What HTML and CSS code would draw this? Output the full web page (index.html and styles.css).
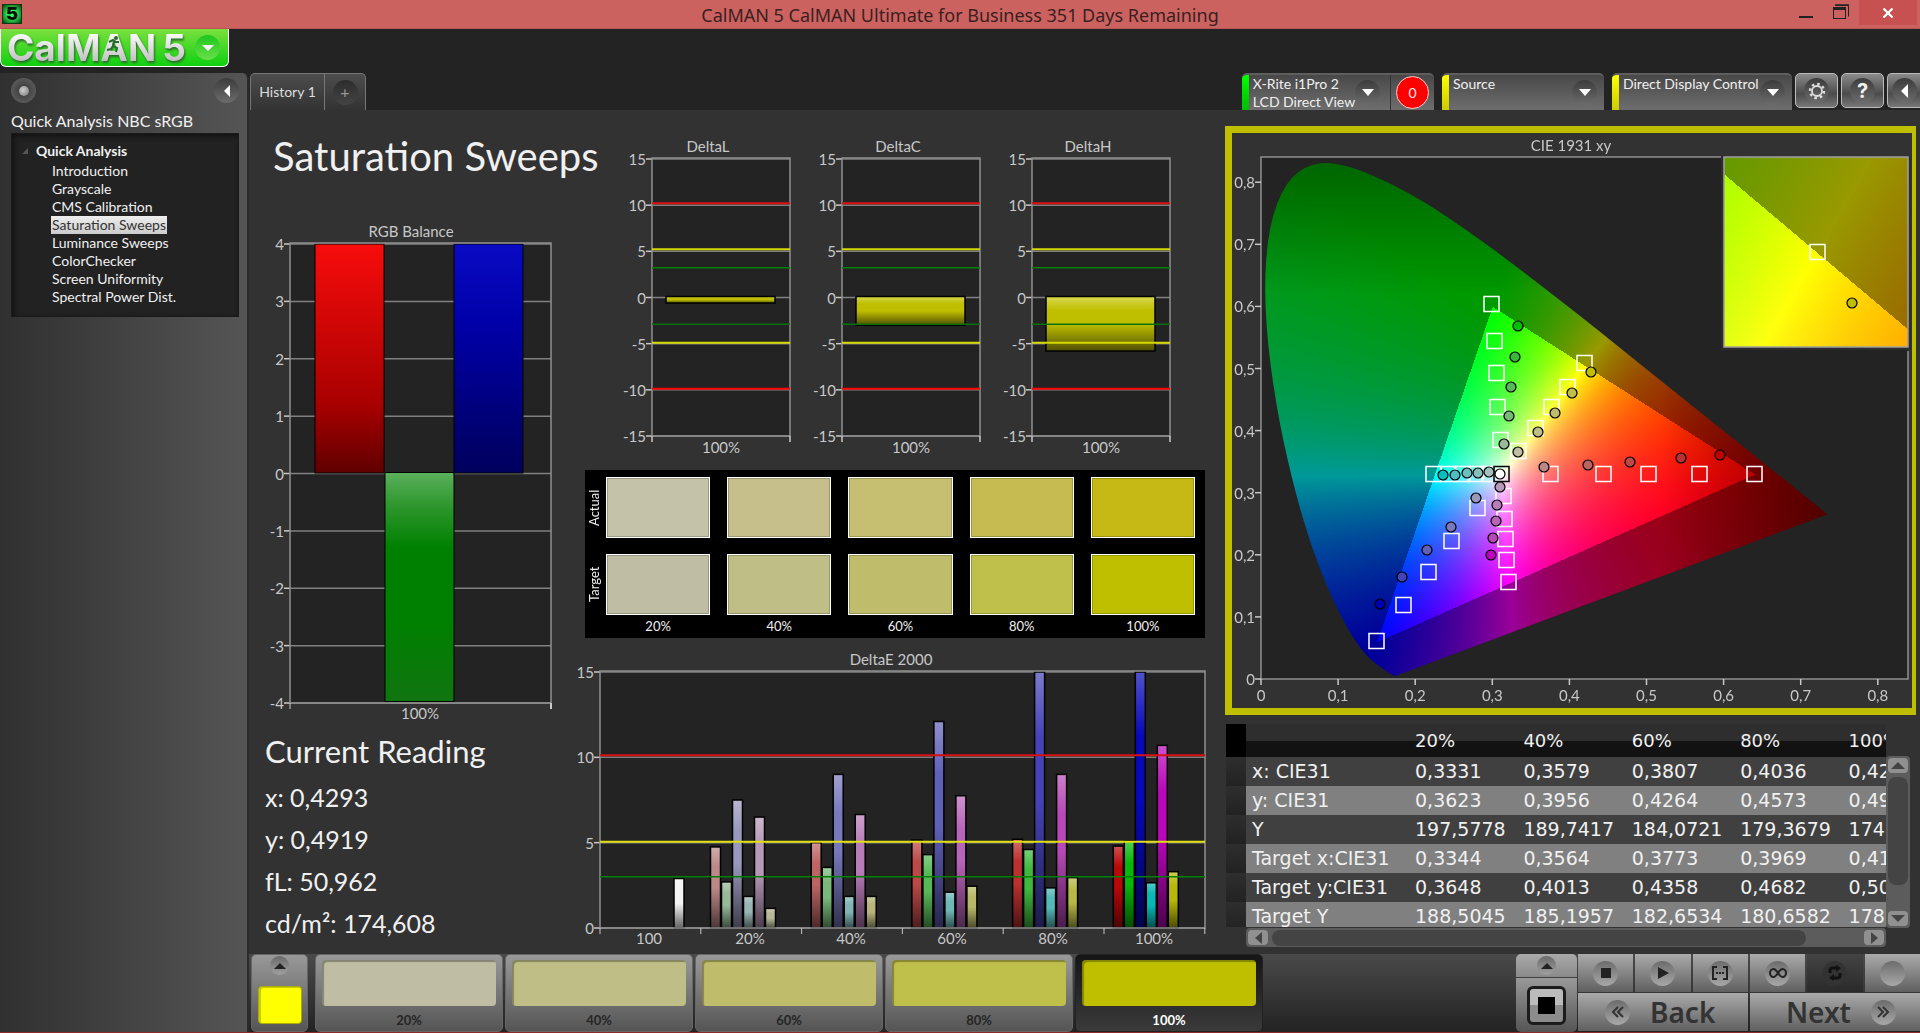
FILE: index.html
```html
<!DOCTYPE html>
<html lang="en">
<head>
<meta charset="utf-8">
<title>CalMAN 5</title>
<link rel="stylesheet" href="styles.css">
</head>
<body>
<header class="titlebar">
  <span class="app-icon">5</span>
  <span class="window-title">CalMAN 5 CalMAN Ultimate for Business 351 Days Remaining</span>
  <div class="window-buttons">
    <button class="win-btn" aria-label="Minimize"><svg width="14" height="20"><path d="M0 16h14v2H0z" fill="#222"/></svg></button>
    <button class="win-btn" aria-label="Restore"><svg width="16" height="20" fill="none" stroke="#222"><path d="M3 5.5h12.500v11" stroke-width="1"/><path d="M2 5h14" stroke-width="1.500"/><rect x=".5" y="8.500" width="12" height="10"/><path d="M0 8.500h13" stroke-width="3"/></svg></button>
    <button class="win-btn close" aria-label="Close"><svg width="12" height="10"><path d="M1.500 .5l9 9M10.500 .5l-9 9" stroke="#fff" stroke-width="2.200"/></svg></button>
  </div>
</header>

<div class="brand-bar">
  <button class="brand" aria-label="CalMAN 5 menu">
    <span class="brand-name">CalMAN<span class="brand-num">5</span></span>
    <svg class="runner" width="16" height="18" viewBox="0 0 16 18"><circle cx="10" cy="3" r="2" fill="#2a6a2a"/><path d="M3 7l4-2 3 2 3 0M8 6L7 11l4 2-1 4M7 11l-2 3-4 1" fill="none" stroke="#2a6a2a" stroke-width="2"/></svg>
    <span class="round brand-arrow"><svg width="12" height="6"><path d="M0 0h12L6 6z" fill="#fff"/></svg></span>
  </button>
</div>

<div class="workspace">
  <aside class="sidebar">
    <div class="side-tools">
      <button class="round knob" aria-label="Options"><span class="ball"></span></button>
      <button class="round" aria-label="Collapse"><svg width="6" height="12"><path d="M6 0v12L0 6z" fill="#fff"/></svg></button>
    </div>
    <h2 class="side-title">Quick Analysis NBC sRGB</h2>
    <nav class="tree">
      <div class="tree-root"><svg width="6" height="6"><path d="M6 0v6H0z" fill="#555"/></svg>Quick Analysis</div>
      <ul>
        <li><a href="#">Introduction</a></li>
        <li><a href="#">Grayscale</a></li>
        <li><a href="#">CMS Calibration</a></li>
        <li><a href="#" class="current">Saturation Sweeps</a></li>
        <li><a href="#">Luminance Sweeps</a></li>
        <li><a href="#">ColorChecker</a></li>
        <li><a href="#">Screen Uniformity</a></li>
        <li><a href="#">Spectral Power Dist.</a></li>
      </ul>
    </nav>
  </aside>

  <div class="content">
    <div class="topbar">
      <div class="tabs">
        <button class="tab">History 1</button>
        <button class="tab add" aria-label="Add tab"><span class="round plus">+</span></button>
      </div>
      <div class="devices">
        <div class="device meter">
          <span class="stripe green"></span>
          <span class="device-text">X-Rite i1Pro 2<br>LCD Direct View</span>
          <button class="round" aria-label="Meter menu"><svg width="12" height="7"><path d="M0 0h12L6 7z" fill="#fff"/></svg></button>
          <span class="count"><span class="count-dot">0</span></span>
        </div>
        <div class="device source">
          <span class="stripe yellow"></span>
          <span class="device-text">Source</span>
          <button class="round" aria-label="Source menu"><svg width="12" height="7"><path d="M0 0h12L6 7z" fill="#fff"/></svg></button>
        </div>
        <div class="device display">
          <span class="stripe yellow"></span>
          <span class="device-text">Direct Display Control</span>
          <button class="round" aria-label="Display menu"><svg width="12" height="7"><path d="M0 0h12L6 7z" fill="#fff"/></svg></button>
        </div>
        <button class="square-btn" aria-label="Settings"><span class="round"><svg width="18" height="18" viewBox="-9 -9 18 18" fill="none" stroke="#ddd"><circle r="5" stroke-width="1.800"/><circle r="7" stroke-width="2.500" stroke-dasharray="2.500 3"/></svg></span></button>
        <button class="square-btn" aria-label="Help"><span class="round help">?</span></button>
        <button class="square-btn cut" aria-label="Collapse panel"><span class="round"><svg width="7" height="14"><path d="M7 0v14L0 7z" fill="#fff"/></svg></span></button>
      </div>
    </div>

    <main class="board">
      <section class="col-left">
        <h1>Saturation Sweeps</h1>
        <svg id="rgb" class="chart" viewBox="0 0 300 505"></svg>
        <div class="reading">
          <h2>Current Reading</h2>
          <p>x: 0,4293</p>
          <p>y: 0,4919</p>
          <p>fL: 50,962</p>
          <p>cd/m²: 174,608</p>
        </div>
      </section>

      <section class="col-mid">
        <div class="deltas">
          <svg id="deltaL" class="chart" viewBox="0 0 190 320"></svg>
          <svg id="deltaC" class="chart" viewBox="0 0 190 320"></svg>
          <svg id="deltaH" class="chart" viewBox="0 0 190 320"></svg>
        </div>
        <div class="swatches">
          <span class="row-name">Actual</span>
          <i class="sw a20"></i><i class="sw a40"></i><i class="sw a60"></i><i class="sw a80"></i><i class="sw a100"></i>
          <span class="row-name">Target</span>
          <i class="sw t20"></i><i class="sw t40"></i><i class="sw t60"></i><i class="sw t80"></i><i class="sw t100"></i>
          <span></span>
          <span class="sw-label">20%</span><span class="sw-label">40%</span><span class="sw-label">60%</span><span class="sw-label">80%</span><span class="sw-label">100%</span>
        </div>
        <svg id="deltaE" class="chart" viewBox="0 0 632 300"></svg>
      </section>

      <section class="col-right">
        <div class="cie">
          <canvas id="gamut" width="680" height="575"></canvas>
          <svg id="ciePlot" class="chart" viewBox="0 0 680 575"></svg>
        </div>
        <div class="grid-wrap">
          <div class="grid-clip">
            <table>
              <colgroup><col class="c-head"><col class="c-name"><col><col><col><col><col></colgroup>
              <thead><tr><td></td><th></th><th>20%</th><th>40%</th><th>60%</th><th>80%</th><th>100%</th></tr></thead>
              <tbody>
                <tr><td></td><th>x: CIE31</th><td>0,3331</td><td>0,3579</td><td>0,3807</td><td>0,4036</td><td>0,4293</td></tr>
                <tr><td></td><th>y: CIE31</th><td>0,3623</td><td>0,3956</td><td>0,4264</td><td>0,4573</td><td>0,4919</td></tr>
                <tr><td></td><th>Y</th><td>197,5778</td><td>189,7417</td><td>184,0721</td><td>179,3679</td><td>174,6080</td></tr>
                <tr><td></td><th>Target x:CIE31</th><td>0,3344</td><td>0,3564</td><td>0,3773</td><td>0,3969</td><td>0,4193</td></tr>
                <tr><td></td><th>Target y:CIE31</th><td>0,3648</td><td>0,4013</td><td>0,4358</td><td>0,4682</td><td>0,5053</td></tr>
                <tr><td></td><th>Target Y</th><td>188,5045</td><td>185,1957</td><td>182,6534</td><td>180,6582</td><td>178,6582</td></tr>
              </tbody>
            </table>
          </div>
          <div class="vbar">
            <button aria-label="Scroll up"><svg width="14" height="7"><path d="M0 7h14L7 0z" fill="#444"/></svg></button>
            <span class="thumb"></span>
            <button aria-label="Scroll down"><svg width="14" height="7"><path d="M0 0h14L7 7z" fill="#444"/></svg></button>
          </div>
          <div class="hbar">
            <button aria-label="Scroll left"><svg width="7" height="12"><path d="M7 0v12L0 6z" fill="#444"/></svg></button>
            <span class="thumb"></span>
            <button aria-label="Scroll right"><svg width="7" height="12"><path d="M0 0v12L7 6z" fill="#444"/></svg></button>
          </div>
        </div>
      </section>
    </main>

    <footer class="footer">
      <button class="picker" aria-label="Colour">
        <span class="round small"><svg width="12" height="6"><path d="M0 6h12L6 0z" fill="#222"/></svg></span>
        <i class="picker-color"></i>
      </button>
      <div class="tiles">
        <button class="tile"><i class="t20"></i>20%</button>
        <button class="tile"><i class="t40"></i>40%</button>
        <button class="tile"><i class="t60"></i>60%</button>
        <button class="tile"><i class="t80"></i>80%</button>
        <button class="tile active"><i class="t100"></i>100%</button>
      </div>
      <div class="pattern">
        <button class="pattern-up" aria-label="Pattern menu"><span class="round small"><svg width="12" height="6"><path d="M0 6h12L6 0z" fill="#222"/></svg></span></button>
        <button class="pattern-pick" aria-label="Pattern window"><span class="frame"><i></i></span></button>
      </div>
      <div class="controls">
        <button aria-label="Stop"><span class="round"><svg width="12" height="12"><path d="M1 1h10v10H1z" fill="#222"/></svg></span></button>
        <button aria-label="Play"><span class="round"><svg width="12" height="14"><path d="M1 1v12l11-6z" fill="#222"/></svg></span></button>
        <button aria-label="Read series"><span class="round"><svg width="16" height="14" fill="none" stroke="#222" stroke-width="2"><path d="M5 1H1v12h4M11 1h4v12h-4"/><path d="M4 7h8" stroke-dasharray="2 1"/></svg></span></button>
        <button aria-label="Continuous"><span class="round"><svg width="18" height="10" fill="none" stroke="#222" stroke-width="2"><path d="M9 5C7 2 6 1 4.500 1a3.500 4 0 0 0 0 8C6 9 7 8 9 5s3-4 4.500-4a3.500 4 0 0 1 0 8C12 9 11 8 9 5z"/></svg></span></button>
        <button class="dark" aria-label="Refresh"><span class="round"><svg width="16" height="16" fill="none" stroke="#111" stroke-width="3"><path d="M3 8V5q0-2 3-2h4M13 8v3q0 2-3 2H6"/><path d="M9 0l5 3-5 4zM7 9l-5 4 5 3z" fill="#111" stroke="none"/></svg></span></button>
        <button aria-label="Status"><span class="round"></span></button>
        <button class="wide"><span class="round"><svg width="13" height="12" fill="none" stroke="#333" stroke-width="2"><path d="M7 1L2 6l5 5M12 1L7 6l5 5"/></svg></span>Back</button>
        <button class="wide next">Next<span class="round"><svg width="13" height="12" fill="none" stroke="#333" stroke-width="2"><path d="M1 1l5 5-5 5M6 1l5 5-5 5"/></svg></span></button>
      </div>
    </footer>
  </div>
</div>
<script src="charts.js"></script>
</body>
</html>
```
FILE: styles.css
```css
* { box-sizing: border-box; }
body {
  margin: 0;
  min-height: 100vh;
  display: flex;
  flex-direction: column;
  overflow-x: hidden;
  background: #232323;
  color: #f0f0f0;
  font: 14px/18px Lato, "Liberation Sans", sans-serif;
  border-bottom: 1px solid #8c2a2a;
}
button {
  border: 0;
  padding: 0;
  background: none;
  color: inherit;
  font: inherit;
}
h1, h2, p, ul { margin: 0; padding: 0; font-weight: 400; }
svg { display: block; flex: none; }
.chart { width: 100%; height: auto; overflow: visible; font-size: 15px; }

.round {
  display: flex;
  align-items: center;
  justify-content: center;
  flex: none;
  width: 25px;
  height: 25px;
  border-radius: 50%;
  background: linear-gradient(#3c3c3c, #6c6c6c);
}
.round.small {
  width: 19px;
  height: 19px;
  background: linear-gradient(#6a6a6a, #a0a0a0);
}

/* Title bar */
.titlebar {
  display: grid;
  grid-template-columns: 1fr auto 1fr;
  height: 29px;
  background: #cc625f;
  border-bottom: 1px solid #b85552;
}
.app-icon {
  width: 20px;
  height: 20px;
  margin: 4px 2px;
  background: radial-gradient(#3f6 30%, #0b3d0b);
  border: 1px solid #0c3a0c;
  color: #031003;
  font: 900 18px/18px Inter, sans-serif;
  text-align: center;
}
.window-title {
  color: #3a1f1f;
  font: 18px/30px "Noto Sans", sans-serif;
}
.window-buttons {
  display: flex;
  justify-content: flex-end;
  gap: 20px;
  padding-right: 3px;
}
.win-btn { height: 20px; }
.win-btn.close {
  display: flex;
  align-items: center;
  justify-content: center;
  width: 58px;
  height: 25px;
  margin-left: -10px;
  background: #c75050;
}

/* Logo */
.brand-bar { height: 44px; }
.brand {
  position: relative;
  display: flex;
  align-items: center;
  justify-content: space-between;
  width: 229px;
  height: 38px;
  padding: 0 8px 0 6px;
  border: 1px solid #fff;
  border-top: 0;
  border-radius: 0 0 6px 6px;
  background: linear-gradient(#7be03f, #0fd00f);
}
.brand-name {
  font: 700 37px/32px Inter, sans-serif;
  background: linear-gradient(#fff, #bbb);
  background-clip: text;
  -webkit-background-clip: text;
  color: transparent;
  filter: drop-shadow(1px 2px 1px #2a6a2a);
}
.brand-num { margin-left: 6px; }
.runner { position: absolute; left: 105px; top: 6px; }
.brand-arrow { background: linear-gradient(#1cc61c, #6be04a); }

/* Sidebar */
.workspace { display: flex; flex: 1; }
.sidebar {
  flex: none;
  width: 249px;
  padding: 5px 8px 0 11px;
  border-radius: 0 6px 0 0;
  border-right: 2px solid #2c2c2c;
  background: linear-gradient(90deg, #303030, #555);
}
.side-tools { display: flex; justify-content: space-between; }
.knob { background: radial-gradient(#333, #6a6a6a); }
.ball {
  width: 10px;
  height: 10px;
  border-radius: 50%;
  background: radial-gradient(circle at 40% 40%, #ccc, #777);
}
.side-title { margin: 8px 0 2px; font-size: 16px; line-height: 20px; white-space: nowrap; }
.tree {
  height: 184px;
  padding: 8px 0 0 10px;
  border: 1px solid #1a1a1a;
  background: #222;
  box-shadow: inset 2px 2px 5px #111;
}
.tree-root {
  display: flex;
  align-items: center;
  gap: 8px;
  margin-bottom: 2px;
  font-weight: 700;
}
.tree ul { padding-left: 29px; list-style: none; }
.tree a { display: inline-block; padding: 0 1px; color: inherit; text-decoration: none; }
.tree li { height: 18px; white-space: nowrap; }
.tree .current { background: linear-gradient(#eee, #ccc); color: #333; }

/* Tabs and devices */
.content { flex: 1; min-width: 0; display: flex; flex-direction: column; }
.topbar { display: flex; justify-content: space-between; height: 37px; }
.tabs {
  display: flex;
  margin-left: 1px;
  border: 1px solid #777;
  border-bottom: 0;
  border-radius: 5px 5px 0 0;
  background: linear-gradient(#4c4c4c, #333);
  color: #ddd;
}
.tab { width: 73px; }
.tab.add { display: flex; align-items: center; justify-content: center; width: 41px; border-left: 1px solid #777; }
.plus { background: linear-gradient(#2c2c2c, #444); color: #999; font-size: 16px; }
.devices { display: flex; gap: 3px; }
.device {
  display: flex;
  align-items: center;
  border-top: 2px solid #5e5e5e;
  border-radius: 5px 5px 0 0;
  background: linear-gradient(#484848, #6e6e6e);
  overflow: hidden;
}
.meter { width: 192px; margin-right: 5px; }
.source { width: 162px; margin-right: 5px; }
.display { width: 180px; }
.stripe { width: 7px; align-self: stretch; margin-right: 4px; }
.stripe.green { background: linear-gradient(#0f0, #0b0); }
.stripe.yellow { background: linear-gradient(#ff0, #cc0); }
.device-text { flex: 1; align-self: flex-start; line-height: 18px; white-space: nowrap; }
.source .round, .display .round { margin-right: 7px; }
.count {
  display: flex;
  align-items: center;
  justify-content: center;
  align-self: stretch;
  width: 45px;
  margin-left: 10px;
  border-left: 1px solid #333;
}
.count-dot {
  width: 33px;
  height: 33px;
  border: 1px solid #ffd0d0;
  border-radius: 50%;
  background: red;
  line-height: 31px;
  text-align: center;
}
.square-btn {
  display: flex;
  align-items: center;
  justify-content: center;
  width: 43px;
  height: 35px;
  border: 1px solid #bbb;
  border-radius: 5px;
  background: linear-gradient(#8a8a8a, #4c4c4c 60%, #777);
}
.square-btn.cut { width: 33px; border-right: 0; border-radius: 5px 0 0 5px; }
.help { font: 700 20px/24px Inter, sans-serif; }

/* Board */
.board {
  flex: 1;
  display: grid;
  grid-template-columns: minmax(0, 324fr) minmax(0, 652fr) minmax(0, 691fr);
  padding-right: 4px;
  background: #323232;
}
.col-left { padding: 14px 8px 0 16px; }
.col-left h1 { margin: 0 0 33px 8px; font-size: 40px; line-height: 64px; white-space: nowrap; }
.reading h2 { font-size: 31px; line-height: 50px; white-space: nowrap; }
.reading p { font-size: 25px; line-height: 42px; }
.col-mid { padding: 28px 20px 0 0; }
.deltas { display: grid; grid-template-columns: repeat(3, 1fr); margin: 0 23px 12px 39px; }
.swatches {
  display: grid;
  grid-template-columns: 4px repeat(5, 1fr);
  grid-template-rows: 61px 61px 20px;
  gap: 16px 17px;
  height: 168px;
  margin: 0 0 12px 12px;
  padding: 7px 10px 0 0;
  background: #000;
}
.row-name {
  justify-self: start;
  width: 18px;
  writing-mode: vertical-rl;
  transform: rotate(180deg);
  text-align: center;
  font-size: 13px;
  line-height: 18px;
}
.sw { border: 1px solid #fff; box-shadow: inset 0 0 0 1px rgba(0, 0, 0, .2); }
.sw-label { margin-top: -14px; text-align: center; font-size: 13px; line-height: 18px; }
.a20 { background: #c4c2a8; }
.a40 { background: #c6be8b; }
.a60 { background: #c6be70; }
.a80 { background: #c6bb50; }
.a100 { background: #c6b815; }
.t20 { background: #bfbea5; }
.t40 { background: #bfbe87; }
.t60 { background: #bfbd6b; }
.t80 { background: #bfbf4c; }
.t100 { background: #bfbf00; }

.col-right { padding-top: 16px; }
.cie {
  position: relative;
  border: 7px solid #bfbf00;
  border-right-width: 4px;
}
.cie canvas { position: absolute; inset: 0; width: 100%; height: 100%; }
.cie svg { position: relative; }

/* Readings grid */
.grid-wrap {
  display: grid;
  grid-template-columns: 1fr 24px;
  margin: 9px 6px 0 1px;
}
.grid-clip { height: 203px; overflow: hidden; }
table {
  width: 725px;
  table-layout: fixed;
  border-collapse: collapse;
  font: 19px/29px "DejaVu Sans", sans-serif;
}
.c-head { width: 20px; }
.c-name { width: 163px; }
th, td { height: 29px; padding: 0 0 0 6px; font-weight: 400; text-align: left; white-space: nowrap; }
thead th { height: 33px; font-size: 18px; background: linear-gradient(#2e2e2e 50%, #121212 50%); }
thead td:first-child { background: #000; }
tbody td:first-child { background: linear-gradient(#2e2e2e, #222); }
tbody tr { background: #404040; }
tbody tr:nth-child(even) { background: #808080; }
.vbar, .hbar { display: flex; align-items: center; justify-content: space-between; background: #5c5c5c; border-radius: 4px; }
.vbar { flex-direction: column; margin-top: 32px; padding: 2px 0; gap: 4px; }
.hbar { height: 19px; margin-left: 20px; padding: 0 2px; gap: 4px; }
.vbar button, .hbar button {
  display: flex;
  align-items: center;
  justify-content: center;
  width: 20px;
  height: 15px;
  border-radius: 4px;
  background: #909090;
}
.vbar .thumb { width: 20px; height: 108px; margin-bottom: 22px; border-radius: 8px; background: #444; }
.hbar .thumb { width: 84%; height: 16px; margin-right: auto; border-radius: 8px; background: #444; }

/* Footer */
.footer {
  display: flex;
  height: 78px;
  background: linear-gradient(#4a4a4a, #232323);
}
.picker, .tile {
  border: 1px solid #666;
  border-radius: 5px;
  background: linear-gradient(#999, #555);
}
.picker {
  display: flex;
  flex-direction: column;
  align-items: center;
  width: 57px;
  margin: 0 7px 0 2px;
  padding-top: 1px;
}
.picker-color {
  width: 44px;
  height: 38px;
  margin-top: 11px;
  border: 1px solid #aa0;
  border-radius: 4px;
  background: #ff0;
  box-shadow: inset 2px 1px 0 #cc0;
}
.tiles { display: flex; flex: 0 1 948px; gap: 2px; }
.tile { flex: 1; padding: 3px 6px 0; color: #262626; font-size: 13px; font-weight: 700; }
.tile i {
  display: block;
  height: 46px;
  margin-bottom: 5px;
  border-radius: 4px;
  box-shadow: inset 2px 2px 1px rgba(0, 0, 0, .3);
}
.tile.active { border-color: #222; background: linear-gradient(#161616, #3a3a3a); color: #fff; }
.pattern { display: flex; flex-direction: column; width: 61px; margin-left: auto; }
.pattern button {
  display: flex;
  align-items: center;
  justify-content: center;
  background: linear-gradient(#aaa, #8a8a8a);
  border-radius: 5px 5px 0 0;
}
.pattern .pattern-up { height: 23px; }
.pattern .pattern-pick { flex: 1; margin-top: 1px; border-radius: 0 0 5px 5px; background: linear-gradient(#999, #555); }
.frame {
  display: flex;
  align-items: center;
  justify-content: center;
  width: 39px;
  height: 39px;
  border: 3px solid #1c1c1c;
  border-radius: 6px;
  background: linear-gradient(#bbb 50%, #8c8c8c 50%);
}
.frame i { width: 17px; height: 17px; background: #000; }
.controls {
  display: grid;
  grid-template-columns: repeat(6, 1fr);
  grid-template-rows: 38px 38px;
  gap: 1px 2px;
  width: 342px;
  margin-left: 1px;
}
.controls button {
  display: flex;
  align-items: center;
  justify-content: center;
  background: linear-gradient(#aaa, #606060);
}
.controls .round { background: linear-gradient(#6c6c6c, #a8a8a8); }
.controls .dark { background: linear-gradient(#444, #2a2a2a); }
.controls .dark .round { background: #333; }
.controls .wide {
  grid-column: span 3;
  justify-content: flex-start;
  gap: 20px;
  padding-left: 27px;
  color: #333;
  font: 600 28px/36px "Noto Sans", sans-serif;
}
.controls .next { justify-content: flex-end; padding: 0 24px 0 0; }
```
FILE: charts.js
```js
const NS = 'http://www.w3.org/2000/svg';

function add(parent, tag, attrs, text) {
  const el = document.createElementNS(NS, tag);
  for (const k in attrs) el.setAttribute(k, attrs[k]);
  if (text !== undefined) el.textContent = text;
  parent.appendChild(el);
  return el;
}
function line(svg, x1, y1, x2, y2, color, width) {
  add(svg, 'path', { d: `M${x1} ${y1}L${x2} ${y2}`, stroke: color, 'stroke-width': width || 1 });
}
function label(svg, x, y, text, anchor) {
  add(svg, 'text', { x, y, fill: '#c8c8c8', 'text-anchor': anchor || 'middle' }, text);
}
function gradient(svg, id, stops) {
  const g = add(svg, 'linearGradient', { id, x1: 0, y1: 0, x2: 0, y2: 1 });
  stops.forEach(([o, c]) => add(g, 'stop', { offset: o, 'stop-color': c }));
  return `url(#${id})`;
}
function mix(hex, other, t) {
  const p = h => [1, 3, 5].map(i => parseInt(h.slice(i, i + 2), 16));
  const a = p(hex), b = p(other);
  return `rgb(${a.map((v, i) => Math.round(v + (b[i] - v) * t)).join(',')})`;
}

// Frame, grid lines and value labels shared by all bar charts.
function frame(svg, o) {
  const y = v => o.b - (v - o.min) / (o.max - o.min) * (o.b - o.t - 1);
  add(svg, 'rect', { x: o.l, y: o.t, width: o.r - o.l, height: o.b - o.t, fill: '#232323' });
  for (let v = o.min; v <= o.max; v += o.step) {
    line(svg, o.l, y(v), o.r, y(v), '#808080', 1.5);
    line(svg, o.l - 6, y(v), o.l, y(v), '#c8c8c8', 1.5);
    label(svg, o.l - 6, y(v) + 6, v, 'end');
  }
  label(svg, o.titleX, o.t - 6, o.title);
  return y;
}
function outline(svg, o) {
  add(svg, 'rect', { x: o.l, y: o.t, width: o.r - o.l, height: o.b - o.t, fill: 'none', stroke: '#909090', 'stroke-width': 1.5 });
}

// RGB balance
{
  const svg = document.getElementById('rgb');
  const o = { l: 25, r: 286, t: 22, b: 482, min: -4, max: 4, step: 1, title: 'RGB Balance', titleX: 146 };
  const y = frame(svg, o);
  const r = gradient(svg, 'gr', [[0, '#f80c0c'], [.7, '#a80000'], [1, '#600000']]);
  const g = gradient(svg, 'gg', [[0, '#5cb05c'], [.15, '#2c962c'], [.33, '#008000'], [.65, '#008000'], [1, '#107410']]);
  const b = gradient(svg, 'gb', [[0, '#0a0ac4'], [.35, '#0000a8'], [1, '#00005c']]);
  [[50, y(4), r], [120, y(0) - 1, g], [189, y(4), b]].forEach(([x, top, fill]) =>
    add(svg, 'rect', { x, y: top, width: 69, height: 229, fill, stroke: '#000' }));
  outline(svg, o);
  line(svg, o.l, o.b, o.l, o.b + 6, '#c8c8c8', 1);
  line(svg, o.r, o.b, o.r, o.b + 6, '#c8c8c8', 2);
  label(svg, 155, 498, '100%');
}

// Delta L / C / H
[['L', -.6], ['C', -3], ['H', -5.8]].forEach(([name, value]) => {
  const svg = document.getElementById('delta' + name);
  const o = { l: 40, r: 178, t: 20, b: 298, min: -15, max: 15, step: 5, title: 'Delta' + name, titleX: 96 };
  const y = frame(svg, o);
  const fill = gradient(svg, 'gd' + name, [[0, '#d8d850'], [.25, '#bfbf00'], [.5, '#bfbf00'], [1, '#505000']]);
  add(svg, 'rect', { x: 54, y: y(0) - 1, width: 109, height: y(value) - y(0) + 1, fill, stroke: '#000', 'stroke-width': 1.5 });
  outline(svg, o);
  [[10, '#e01010'], [5, '#d8d800'], [3, '#008000'], [-3, '#087008'], [-5, '#d8d800'], [-10, '#ff0000']].forEach(([v, c]) => {
    const ly = y(v) - (v > 0 ? 2 : 1);
    line(svg, o.l, ly, o.r, ly, c, Math.abs(v) === 3 ? 1.5 : 2);
  });
  line(svg, o.l, o.b, o.l, o.b + 6, '#c8c8c8', 1.5);
  line(svg, o.r, o.b, o.r, o.b + 6, '#c8c8c8', 1.5);
  label(svg, 109, 315, '100%');
});

// Delta E 2000
{
  const svg = document.getElementById('deltaE');
  const o = { l: 27, r: 632, t: 21, b: 278, min: 0, max: 15, step: 5, title: 'DeltaE 2000', titleX: 318 };
  const y = frame(svg, o);
  const bar = (x, v, color, id) => {
    const fill = gradient(svg, id, [[0, mix(color, '#ffffff', .3)], [.25, color], [.5, color], [1, mix(color, '#000000', .6)]]);
    add(svg, 'rect', { x, y: y(v), width: 10, height: y(0) - y(v), fill, stroke: '#000', 'stroke-width': 1.5 });
  };
  bar(101, 2.9, '#f4f4f4', 'w');
  const colors = [
    ['#bc8888', '#98b898', '#9898bc', '#98b4b4', '#b898b8', '#b8b898'],
    ['#bc6464', '#78b878', '#7878bc', '#80b4b4', '#b87cb8', '#b8b47c'],
    ['#bc4848', '#58b858', '#6060b8', '#70b8b8', '#b864b8', '#b8b868'],
    ['#bc3030', '#40b840', '#4444b8', '#54b8b8', '#b848b8', '#b8b848'],
    ['#b80808', '#08b808', '#0808b8', '#08b8b8', '#b808b8', '#b8b808']
  ];
  const values = [
    [4.75, 2.7, 7.5, 1.85, 6.5, 1.15],
    [5, 3.55, 9, 1.85, 6.65, 1.85],
    [5.15, 4.3, 12.1, 2.1, 7.75, 2.45],
    [5.2, 4.6, 15, 2.35, 9, 2.95],
    [4.8, 5.1, 15, 2.65, 10.7, 3.3]
  ];
  values.forEach((set, g) => set.forEach((v, i) => bar(137.5 + g * 100.7 + i * 11, v, colors[g][i], `e${g}${i}`)));
  outline(svg, o);
  line(svg, o.l, y(10) - 2, o.r, y(10) - 2, '#d81010', 2);
  line(svg, o.l, y(5) - 1, o.r, y(5) - 1, '#e0e010', 2);
  line(svg, o.l, y(3), o.r, y(3), '#008000', 1.5);
  ['100', '20%', '40%', '60%', '80%', '100%'].forEach((t, i) => label(svg, 76 + i * 101, 294, t));
  for (let i = 0; i <= 6; i++) line(svg, 27 + i * 100.8, o.b, 27 + i * 100.8, o.b + 6, '#c8c8c8', 1);
}

// CIE 1931 chromaticity diagram
{
  const L = 29, T = 24, R = 676, B = 546, SX = 771, SY = 621;
  const px = x => L + x * SX, py = y => B - y * SY;
  const locus = [[.1741, .005], [.1714, .0051], [.1644, .0109], [.1566, .0177], [.144, .0297], [.1355, .0399], [.1241, .0578],
    [.1096, .0868], [.0913, .1327], [.0687, .2007], [.0454, .295], [.0235, .4127], [.0082, .5384], [.0039, .6548],
    [.0139, .7502], [.0389, .812], [.0743, .8338], [.1142, .8262], [.1547, .8059], [.1929, .7816], [.2296, .7543],
    [.3016, .6923], [.3731, .6245], [.4441, .5547], [.5125, .4866], [.5752, .4242], [.627, .3725], [.6658, .334],
    [.6915, .3083], [.719, .2809], [.7347, .2653]];

  function shade(x, y) {
    const X = x / y, Z = (1 - x - y) / y;
    const c = [3.2406 * X - 1.5372 - .4986 * Z, -.9689 * X + 1.8758 + .0415 * Z, .0557 * X - .204 + 1.057 * Z];
    const max = Math.max(...c);
    let k = Math.min(...c) < 0 ? .6 : 1;
    if (x > .52) k *= 1 - (x - .52) * 2.2;
    if (y > .62) k *= 1 - (y - .62) * 1.6;
    return c.map(v => 255 * k * Math.pow(Math.max(0, v / max), 1.1));
  }
  function fill(w, h, toXY) {
    const cv = document.createElement('canvas');
    cv.width = w; cv.height = h;
    const cx = cv.getContext('2d'), img = cx.createImageData(w, h);
    for (let j = 0; j < h; j++) for (let i = 0; i < w; i++) {
      const [x, y] = toXY(i, j), c = shade(x, Math.max(y, .001)), n = (j * w + i) * 4;
      img.data[n] = c[0]; img.data[n + 1] = c[1]; img.data[n + 2] = c[2]; img.data[n + 3] = 255;
    }
    cx.putImageData(img, 0, 0);
    return cv;
  }
  const ctx = document.getElementById('gamut').getContext('2d');
  ctx.fillStyle = '#232323';
  ctx.fillRect(L, T, R - L, B - T);
  ctx.save();
  ctx.beginPath();
  ctx.moveTo(px(locus[0][0]), py(locus[0][1]));
  for (let i = 1; i < locus.length - 1; i++) {
    const [a, b] = locus[i], [c, d] = locus[i + 1];
    ctx.quadraticCurveTo(px(a), py(b), px((a + c) / 2), py((b + d) / 2));
  }
  ctx.lineTo(px(.7347), py(.2653));
  ctx.closePath();
  ctx.clip();
  ctx.drawImage(fill(680, 575, (i, j) => [(i - L) / SX, (B - j) / SY]), 0, 0);
  ctx.restore();
  ctx.fillStyle = '#2c2c2c';
  ctx.fillRect(489, T - 1, 190, 194);
  ctx.drawImage(fill(184, 190, (i, j) => [.4193 + (i - 92.5) / 3550, .5053 - (j - 95) / 3770]), 492, T);

  const svg = document.getElementById('ciePlot');
  add(svg, 'path', { d: `M489 ${T}H${L}V${B}H${R}V218`, fill: 'none', stroke: '#909090', 'stroke-width': 1.5 });
  add(svg, 'rect', { x: 492, y: T, width: 184, height: 190, fill: 'none', stroke: '#a0a0a0', 'stroke-width': 1.5 });
  for (let i = 0; i <= 8; i++) {
    const t = i ? '0,' + i : '0';
    line(svg, px(i / 10), B, px(i / 10), B + 6, '#c8c8c8', 1.5);
    line(svg, L - 6, py(i / 10), L, py(i / 10), '#c8c8c8', 1.5);
    label(svg, px(i / 10), B + 22, t);
    label(svg, L - 6, py(i / 10) + 6, t, 'end');
  }
  label(svg, 339, 18, 'CIE 1931 xy');

  const square = (x, y, stroke) => add(svg, 'rect', { x: x - 7, y: y - 7.5, width: 15, height: 15, fill: 'none', stroke: stroke || '#fff', 'stroke-width': 1.5 });
  const dot = (x, y, fillColor) => add(svg, 'circle', { cx: x + 1, cy: y, r: 5, fill: fillColor, stroke: '#000', 'stroke-width': 1.2 });
  [[259, 171], [262, 208], [264, 240], [265, 274], [268, 307], [352, 230], [335, 254], [319, 274], [303, 295], [286, 318],
    [318, 341], [371, 341], [416, 341], [467, 341], [522, 341], [201, 341], [216, 341], [230, 341], [243, 341], [257, 341],
    [271, 363], [272, 386], [273, 406], [274, 427], [276, 449], [245, 375], [219, 408], [196, 439], [171, 472], [144, 508],
    [585, 119]].forEach(([x, y]) => square(x, y));
  square(269, 341, '#000');
  [[285, 193, '#00bf00'], [282, 224, '#38b838'], [278, 254, '#58b858'], [276, 283, '#78b878'], [271, 311, '#98b898'],
    [358, 239, '#bfbf00'], [339, 260, '#bfbf4c'], [322, 280, '#bfbd6b'], [305, 299, '#bfbe87'], [285, 319, '#bfbea5'],
    [311, 334, '#bc8888'], [355, 332, '#bc6464'], [397, 329, '#bc4848'], [448, 325, '#bc3030'], [487, 322, '#bf0000'],
    [210, 342, '#00bfbf'], [222, 342, '#4cbfbf'], [234, 340, '#6bbfbf'], [245, 340, '#87bfbf'], [256, 339, '#a5bfbf'],
    [267, 354, '#b898b8'], [264, 372, '#b87cb8'], [263, 388, '#b864b8'], [260, 405, '#b848b8'], [258, 422, '#bf00bf'],
    [243, 365, '#9898bc'], [218, 394, '#7878bc'], [194, 417, '#6060b8'], [169, 444, '#4444b8'], [147, 471, '#0000b0'],
    [267, 341, '#ffffff'], [619, 170, '#bfbf00']].forEach(([x, y, c]) => dot(x, y, c));
}
```
